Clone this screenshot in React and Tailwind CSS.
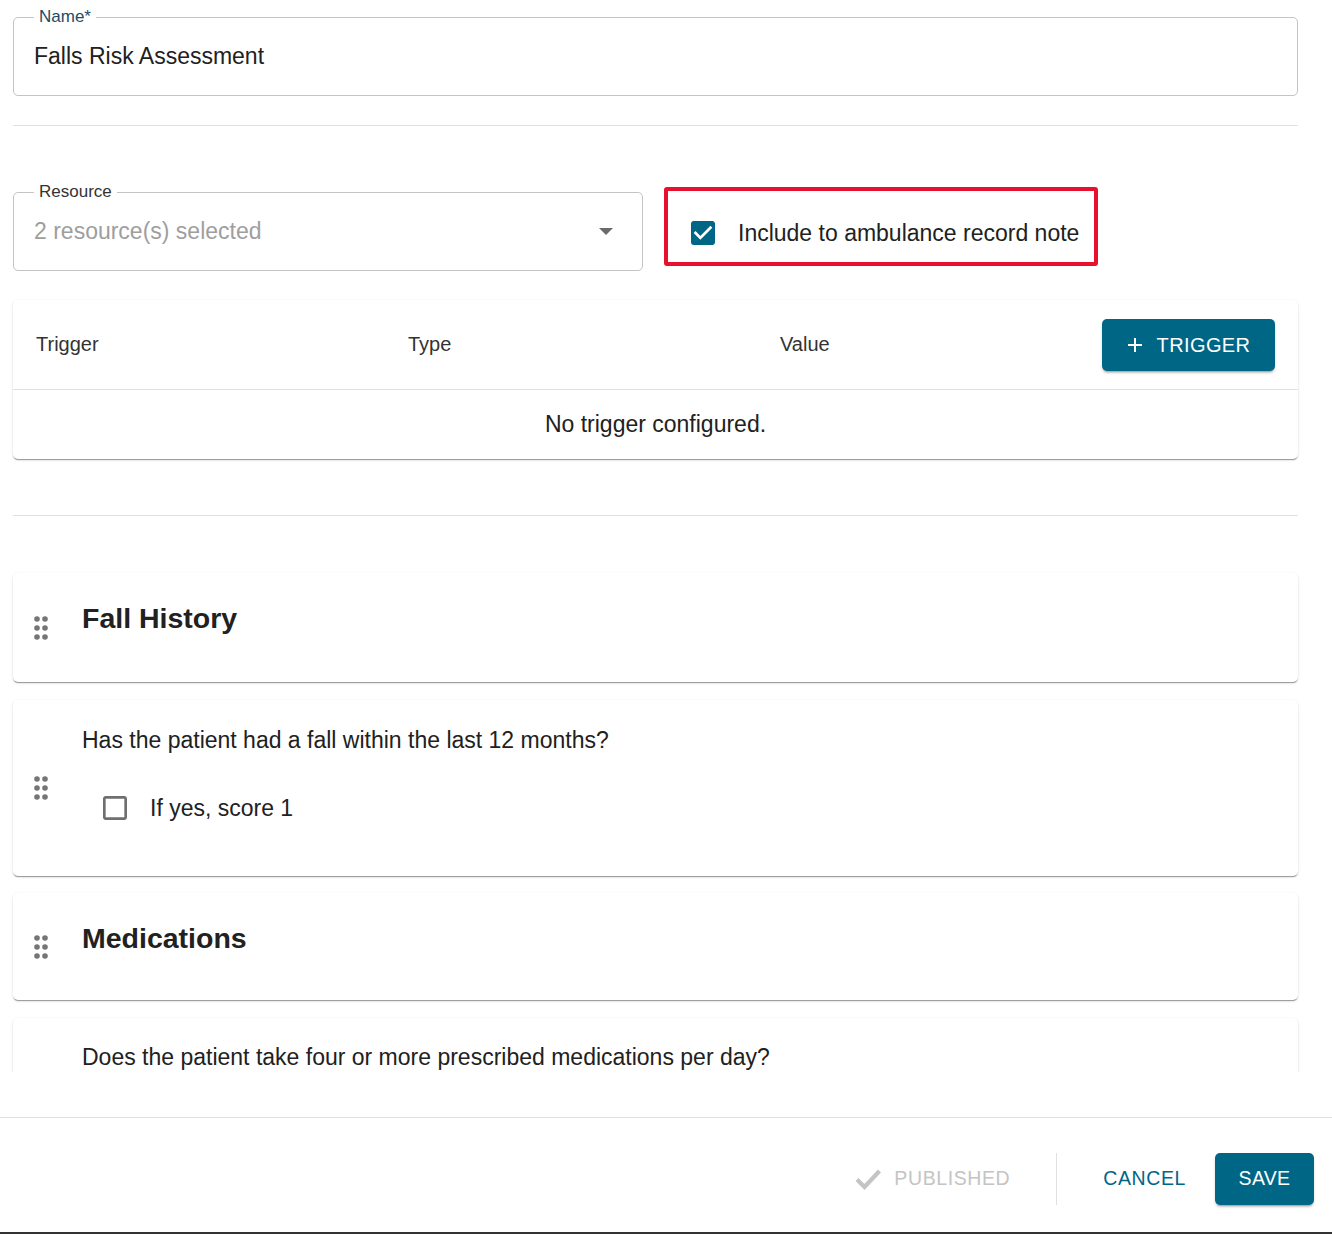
import React from "react";

const teal = "bg-[#006685]";

// drag handle – 2x3 dots
const DragDots = () => (
  <svg width="14" height="24" viewBox="0 0 14 24" className="shrink-0">
    {[3, 12, 21].map((cy) =>
      [3, 11].map((cx) => (
        <circle key={`${cx}-${cy}`} cx={cx} cy={cy} r="2.8" fill="#757575" />
      ))
    )}
  </svg>
);

const CheckedBox = () => (
  <svg width="32" height="32" viewBox="0 0 24 24" className="-m-[4px]">
    <path
      d="M19 3H5c-1.11 0-2 .9-2 2v14c0 1.1.89 2 2 2h14c1.11 0 2-.9 2-2V5c0-1.1-.89-2-2-2zm-9 14l-5-5 1.41-1.41L10 14.17l7.59-7.59L19 8l-9 9z"
      fill="#006685"
    />
  </svg>
);

const EmptyBox = () => (
  <svg width="32" height="32" viewBox="0 0 24 24" className="-m-[4px]">
    <path
      d="M19 5v14H5V5h14m0-2H5c-1.1 0-2 .9-2 2v14c0 1.1.9 2 2 2h14c1.1 0 2-.9 2-2V5c0-1.1-.9-2-2-2z"
      fill="#6f6f6f"
    />
  </svg>
);

const OutlinedField = ({ label, labelColor, children, className }) => (
  <div className={`relative rounded-[5px] border border-[#c4c4c4] ${className}`}>
    <span
      className={`absolute -top-[10px] left-[20px] bg-white px-[5px] text-[17px] leading-[18px] ${labelColor}`}
    >
      {label}
    </span>
    {children}
  </div>
);

const Card = ({ className, children }) => (
  <div
    className={`rounded-[5px] bg-white shadow-[0_2px_1px_-1px_rgba(0,0,0,0.25),0_1px_1px_0_rgba(0,0,0,0.14),0_1px_3px_0_rgba(0,0,0,0.12)] ${className}`}
  >
    {children}
  </div>
);

const SectionCard = ({ title, height, mt }) => (
  <Card className={`flex ${height} ${mt}`}>
    <div className="flex w-[69px] items-center pl-[21px]">
      <DragDots />
    </div>
    <div className="pt-[28px]">
      <h2 className="text-[28.5px] font-bold leading-[34px] text-[#212121]">{title}</h2>
    </div>
  </Card>
);

export default function App() {
  return (
    <div
      className="flex h-[1234px] flex-col bg-white text-[#212121]"
      style={{ fontFamily: "'Liberation Sans', Arial, sans-serif" }}
    >
      {/* scrollable content */}
      <div className="h-[1072px] shrink-0 overflow-hidden pl-[13px] pr-[34px]">
        <OutlinedField
          label="Name*"
          labelColor="text-[#1d4b63]"
          className="mt-[17px] flex h-[79px] items-center pl-[20px]"
        >
          <span className="text-[23px]">Falls Risk Assessment</span>
        </OutlinedField>

        <div className="mt-[29px] border-t border-[#e0e0e0]" />

        <div className="mt-[61px] flex items-start gap-[21px]">
          <OutlinedField
            label="Resource"
            labelColor="text-[#333]"
            className="mt-[5px] flex h-[79px] w-[630px] items-center justify-between pl-[20px] pr-[29px]"
          >
            <span className="text-[23px] text-[#9e9e9e]">2 resource(s) selected</span>
            <svg width="14" height="7" viewBox="0 0 14 7">
              <path d="M0 0h14L7 7z" fill="#6b6b6b" />
            </svg>
          </OutlinedField>

          <div className="flex h-[79px] w-[434px] items-center rounded-[3px] border-4 border-[#e8102c] pl-[23px] pt-[13px]">
            <CheckedBox />
            <span className="ml-[23px] text-[23px]">Include to ambulance record note</span>
          </div>
        </div>

        {/* trigger table */}
        <Card className="mt-[29px]">
          <div className="flex h-[90px] items-center border-b border-[#e0e0e0] pl-[23px] pr-[23px] text-[20px] text-[#333]">
            <div className="w-[372px] pb-[2px]">Trigger</div>
            <div className="w-[372px] pb-[2px]">Type</div>
            <div className="flex-1 pb-[2px]">Value</div>
            <button
              className={`flex h-[52px] w-[173px] items-center justify-center gap-[14px] rounded-[5px] text-[20px] tracking-[0.4px] text-white shadow-[0_3px_2px_-2px_rgba(0,0,0,0.3),0_2px_3px_0_rgba(0,0,0,0.15)] ${teal}`}
            >
              <svg width="16" height="16" viewBox="0 0 16 16">
                <path d="M8 1v14M1 8h14" stroke="#fff" strokeWidth="2" />
              </svg>
              TRIGGER
            </button>
          </div>
          <div className="flex h-[69px] items-center justify-center text-[23px]">
            No trigger configured.
          </div>
        </Card>

        <div className="mt-[56px] border-t border-[#e0e0e0]" />

        <SectionCard title="Fall History" height="h-[109px]" mt="mt-[57px]" />

        <Card className="mt-[18px] flex h-[176px]">
          <div className="flex w-[69px] items-center pl-[21px]">
            <DragDots />
          </div>
          <div className="pt-[27px]">
            <p className="text-[23px] leading-[27px]">Has the patient had a fall within the last 12 months?</p>
            <div className="mt-[37px] flex items-center pl-[21px]">
              <EmptyBox />
              <span className="ml-[23px] text-[23px]">If yes, score 1</span>
            </div>
          </div>
        </Card>

        <SectionCard title="Medications" height="h-[107px]" mt="mt-[17px]" />

        <Card className="mt-[18px] flex h-[120px]">
          <div className="w-[69px]" />
          <div className="pt-[26px]">
            <p className="text-[23px] leading-[27px]">
              Does the patient take four or more prescribed medications per day?
            </p>
          </div>
        </Card>
      </div>

      <div className="h-[45px] shrink-0" />

      {/* footer actions */}
      <div className="flex h-[115px] shrink-0 items-center justify-end border-t border-[#e0e0e0] pr-[18px] pt-[8px]">
        <div className="flex items-center gap-[12px] text-[19.5px] tracking-[0.6px] text-[#c4c4c4]">
          <svg width="28" height="22" viewBox="0 0 28 22">
            <path d="M3 11.5l7.5 7.5L25.5 3" stroke="#c4c4c4" strokeWidth="4.2" fill="none" />
          </svg>
          <span>PUBLISHED</span>
        </div>
        <div className="ml-[46px] h-[52px] w-px bg-[#e0e0e0]" />
        <button className="ml-[46px] text-[19.5px] tracking-[0.6px] text-[#006685]">CANCEL</button>
        <button
          className={`ml-[29px] h-[52px] w-[99px] rounded-[5px] text-[19.5px] tracking-[0.3px] text-white shadow-[0_3px_2px_-2px_rgba(0,0,0,0.3),0_2px_3px_0_rgba(0,0,0,0.15)] ${teal}`}
        >
          SAVE
        </button>
      </div>
      <div className="h-[2px] shrink-0 bg-[#333]" />
    </div>
  );
}
